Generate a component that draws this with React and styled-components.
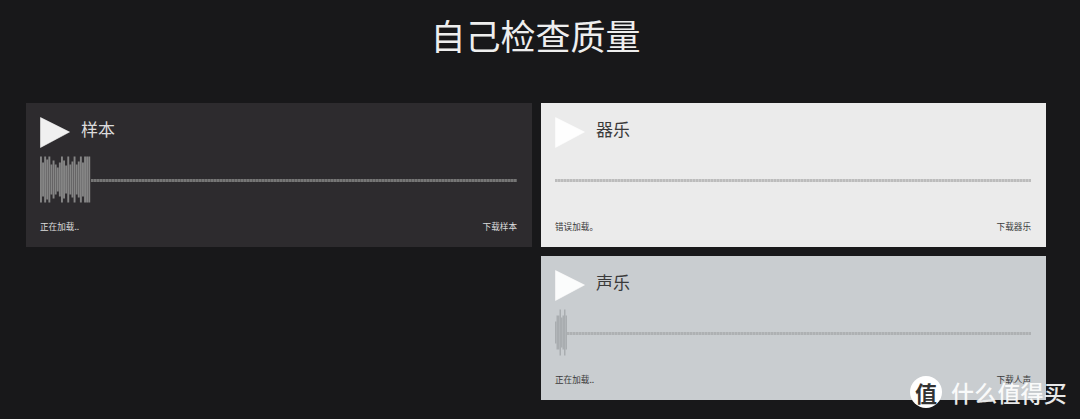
import React from "react";
import styled, { createGlobalStyle } from "styled-components";

const Global = createGlobalStyle`
  html, body { margin: 0; padding: 0; background: #18181a; }
  body { width: 1080px; height: 419px; overflow: hidden; font-family: "Liberation Sans", "Noto Sans CJK SC", sans-serif; }
`;
const Page = styled.main`
  position: relative;
  width: 1080px;
  height: 419px;
  box-sizing: border-box;
  padding: 0 34px 0 26px;
  background: #18181a;
`;
const Title = styled.h1`
  margin: 0;
  height: 103px;
  padding: 12px 1px 0 0;
  box-sizing: border-box;
  text-align: center;
  font: 400 35px/46px "Noto Sans CJK SC", sans-serif;
  color: #eeeeee;
`;
const Grid = styled.div`
  display: grid;
  grid-template-columns: 506px 505px;
  gap: 9px;
  align-items: start;
`;
const Column = styled.div`
  display: flex;
  flex-direction: column;
  gap: 9px;
`;
const Card = styled.section`
  height: 144px;
  box-sizing: border-box;
  padding: 14px 15px 0 14px;
  background: ${(p) => p.$bg};
  color: ${(p) => p.$fg};
  display: flex;
  flex-direction: column;
`;
const Head = styled.div`
  display: flex;
  align-items: center;
  height: 30px;
  gap: 11px;
`;
const Name = styled.span`
  font: 400 17px/24px "Noto Sans CJK SC", sans-serif;
  position: relative;
  top: -3px;
`;
const Wave = styled.div`
  margin-top: 9px;
  height: 47px;
  display: flex;
  align-items: center;
`;
const Line = styled.div`
  flex: 1;
  height: 3px;
  margin-top: 1px;
  background: repeating-linear-gradient(90deg, ${(p) => p.$c} 0 2px, ${(p) => p.$gap} 2px 3px);
`;
const Foot = styled.div`
  margin-top: 16px;
  display: flex;
  justify-content: space-between;
  font: 400 8.6px/14px "Noto Sans CJK SC", sans-serif;
`;
const Mark = styled.div`
  position: absolute;
  left: 910px;
  top: 376px;
  display: flex;
  align-items: center;
  gap: 9px;
  color: #fff;
`;
const Badge = styled.span`
  width: 32px;
  height: 32px;
  border-radius: 50%;
  background: #fff;
  color: #333;
  display: flex;
  align-items: center;
  justify-content: center;
  font: 700 22px/32px "Noto Sans CJK SC", sans-serif;
`;
const Brand = styled.span`
  font: 500 23px/32px "Noto Sans CJK SC", sans-serif;
  letter-spacing: 0.2px;
  opacity: 0.9;
`;

const Play = () => (
  <svg width="30" height="31" viewBox="0 0 30 31">
    <path d="M0.5 0.5 L29.5 15 L0.5 30.5 Z" fill="#fff" fillOpacity="0.93" stroke="#fff" strokeOpacity="0.9" strokeWidth="0.6" strokeLinejoin="round" />
  </svg>
);

const samples = [46,34,46,40,46,30,38,30,24,34,46,38,28,46,30,36,46,30,36,46,34,46,46,46];
const SampleWave = () => (
  <svg width="51" height="47" viewBox="0 0 51 47">
    {samples.map((h, i) => (
      <rect key={i} x={i * 2.1} y={23.5 - h / 2} width="1.9" height={h} fill="#858585" />
    ))}
  </svg>
);
const vocal = [22, 34, 34, 46, 30, 34, 46, 34];
const VocalWave = () => (
  <svg width="12" height="47" viewBox="0 0 12 47">
    {vocal.map((h, i) => (
      <rect key={i} x={i * 1.5} y={23.5 - h / 2} width="1.5" height={h} fill="#a9adb0" />
    ))}
  </svg>
);

const Player = ({ bg, fg, line, gap, name, status, action, wave }) => (
  <Card $bg={bg} $fg={fg}>
    <Head>
      <Play />
      <Name>{name}</Name>
    </Head>
    <Wave>
      {wave}
      <Line $c={line} $gap={gap} />
    </Wave>
    <Foot>
      <span>{status}</span>
      <span>{action}</span>
    </Foot>
  </Card>
);

export default function App() {
  return (
    <Page>
      <Global />
      <Title>自己检查质量</Title>
      <Grid>
        <Player bg="#2d2b2e" fg="#dcdcdc" line="#757575" gap="#606060" name="样本" status="正在加载.." action="下载样本" wave={<SampleWave />} />
        <Column>
          <Player bg="#ebebeb" fg="#3a3a3a" line="#bcbcbc" gap="#cccccc" name="器乐" status="错误加载。" action="下载器乐" />
          <Player bg="#c9cdd0" fg="#3a3a3a" line="#aeb1b3" gap="#b9bcbe" name="声乐" status="正在加载.." action="下载人声" wave={<VocalWave />} />
        </Column>
      </Grid>
      <Mark>
        <Badge>值</Badge>
        <Brand>什么值得买</Brand>
      </Mark>
    </Page>
  );
}
